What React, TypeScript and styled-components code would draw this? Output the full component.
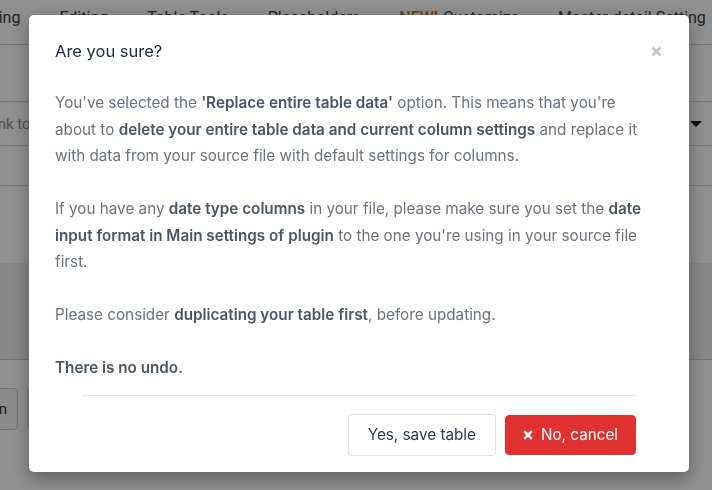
import React from "react";
import styled, { createGlobalStyle } from "styled-components";

const Global = createGlobalStyle`
  html, body { margin: 0; padding: 0; }
  body { background: #ffffff; width: 712px; height: 490px; overflow: hidden; font-family: Roboto, "Liberation Sans", sans-serif; }
  * { box-sizing: border-box; }
`;

const Page = styled.div`
  width: 712px;
  height: 490px;
  display: flex;
  flex-direction: column;
  overflow: hidden;
  color: #3c434a;
`;

const TabsBar = styled.div`
  height: 45px;
  flex: none;
  border-bottom: 1px solid #d2d4d8;
  display: flex;
  align-items: flex-start;
  padding-top: 8px;
  overflow: hidden;
  white-space: nowrap;
`;

const TabsTrack = styled.div`
  display: flex;
  margin-left: -31px;
`;

const Tab = styled.div<{ $first?: boolean }>`
  font-size: 16px;
  line-height: 20px;
  color: #3c434a;
  padding: 0 19.5px;
  ${(p) => (p.$first ? "padding-left: 0;" : "")}
`;

const NewBadge = styled.span`
  color: #d56a25;
  font-weight: 500;
  margin-right: 5px;
`;

const Spacer = styled.div<{ $h: number; $bg?: string; $border?: boolean }>`
  height: ${(p) => p.$h}px;
  flex: none;
  background: ${(p) => p.$bg || "transparent"};
  border-bottom: ${(p) => (p.$border ? "1px solid #d2d4d8" : "none")};
`;

const InputRow = styled.div`
  height: 44px;
  flex: none;
  display: flex;
  align-items: center;
  justify-content: space-between;
  border-bottom: 1px solid #d2d4d8;
  padding-right: 10px;
  font-size: 15px;
  color: #8c8f94;
`;

const InputText = styled.span`
  margin-left: -14px;
`;

const Caret = styled.span`
  width: 0;
  height: 0;
  border-left: 6px solid transparent;
  border-right: 6px solid transparent;
  border-top: 6px solid #1d2327;
`;

const ButtonRow = styled.div`
  display: flex;
  gap: 9px;
  padding-top: 28px;
  margin-left: -60px;
`;

const PageButton = styled.div`
  height: 42px;
  width: 78px;
  border: 1px solid #c9ccd1;
  border-radius: 4px;
  display: flex;
  align-items: center;
  justify-content: flex-end;
  padding-right: 10px;
  font-size: 15px;
  color: #2c3338;
  background: #f6f7f7;
`;

const Overlay = styled.div`
  position: fixed;
  inset: 0;
  background: rgba(0, 0, 0, 0.44);
  display: flex;
  align-items: flex-start;
  padding: 15px 0 0 29px;
`;

const Modal = styled.div`
  width: 660px;
  height: 457px;
  background: #ffffff;
  border-radius: 5px;
  box-shadow: 0 6px 18px rgba(0, 0, 0, 0.35);
  display: flex;
  flex-direction: column;
  font-family: Inter, "Noto Sans", sans-serif;
`;

const Header = styled.div`
  display: flex;
  align-items: center;
  justify-content: space-between;
  padding: 24px 26px 0 26px;
`;

const Title = styled.h2`
  margin: 0;
  font-size: 16.5px;
  line-height: 24px;
  font-weight: 400;
  color: #1e293b;
`;

const CloseBtn = styled.button`
  border: 0;
  background: none;
  padding: 0;
  width: 14px;
  height: 14px;
  display: flex;
  align-items: center;
  justify-content: center;
  cursor: pointer;
`;

const Body = styled.div`
  padding: 27px 30px 13px 26px;
  flex: 1;
`;

const Para = styled.p`
  margin: 0 0 26.5px 0;
  font-size: 15.25px;
  line-height: 26.5px;
  color: #6b7280;
  &:last-child { margin-bottom: 0; }
`;

const B = styled.strong`
  font-weight: 600;
  color: #4b5567;
`;

const Footer = styled.div`
  margin: 0 53px;
  border-top: 1px solid #e3e4e6;
  padding: 18px 0 17px 0;
  display: flex;
  justify-content: flex-end;
  align-items: center;
  gap: 9px;
`;

const Btn = styled.button<{ $danger?: boolean }>`
  font-family: Inter, "Noto Sans", sans-serif;
  font-size: 15.25px;
  height: ${(p) => (p.$danger ? "40px" : "42px")};
  padding: 0 ${(p) => (p.$danger ? "17px" : "19px")};
  border-radius: 4px;
  display: flex;
  align-items: center;
  gap: 8px;
  cursor: pointer;
  border: 1px solid ${(p) => (p.$danger ? "#e03131" : "#dcdfe3")};
  background: ${(p) => (p.$danger ? "#e03131" : "#ffffff")};
  color: ${(p) => (p.$danger ? "#ffffff" : "#2d3a55")};
`;

export default function App() {
  return (
    <>
      <Global />
      <Page>
        <TabsBar>
          <TabsTrack>
            <Tab $first>Sorting</Tab>
            <Tab>Editing</Tab>
            <Tab>Table Tools</Tab>
            <Tab>Placeholders</Tab>
            <Tab>
              <NewBadge>NEW!</NewBadge>Customize
            </Tab>
            <Tab>Master-detail Setting</Tab>
          </TabsTrack>
        </TabsBar>
        <Spacer $h={57} $border />
        <InputRow>
          <InputText>Link to</InputText>
          <Caret />
        </InputRow>
        <Spacer $h={40} $border />
        <Spacer $h={77} />
        <Spacer $h={97} $bg="#f0f0f1" $border />
        <ButtonRow>
          <PageButton>Button</PageButton>
          <PageButton>Save</PageButton>
        </ButtonRow>
      </Page>
      <Overlay>
        <Modal role="dialog">
          <Header>
            <Title>Are you sure?</Title>
            <CloseBtn aria-label="Close">
              <svg width="11" height="11" viewBox="0 0 11 11">
                <path d="M1.5 1.5 L9.5 9.5 M9.5 1.5 L1.5 9.5" stroke="#c4c6ca" strokeWidth="2.6" strokeLinecap="butt" />
              </svg>
            </CloseBtn>
          </Header>
          <Body>
            <Para>
              You've selected the <B>'Replace entire table data'</B> option. This means that you're about to{" "}
              <B>delete your entire table data and current column settings</B> and replace it with data from your
              source file with default settings for columns.
            </Para>
            <Para>
              If you have any <B>date type columns</B> in your file, please make sure you set the{" "}
              <B>date input format in Main settings of plugin</B> to the one you're using in your source file first.
            </Para>
            <Para>
              Please consider <B>duplicating your table first</B>, before updating.
            </Para>
            <Para>
              <B>There is no undo.</B>
            </Para>
          </Body>
          <Footer>
            <Btn>Yes, save table</Btn>
            <Btn $danger>
              <svg width="10" height="10" viewBox="0 0 10 10">
                <path d="M1.2 1.2 L8.8 8.8 M8.8 1.2 L1.2 8.8" stroke="#ffffff" strokeWidth="2.4" />
              </svg>
              No, cancel
            </Btn>
          </Footer>
        </Modal>
      </Overlay>
    </>
  );
}
